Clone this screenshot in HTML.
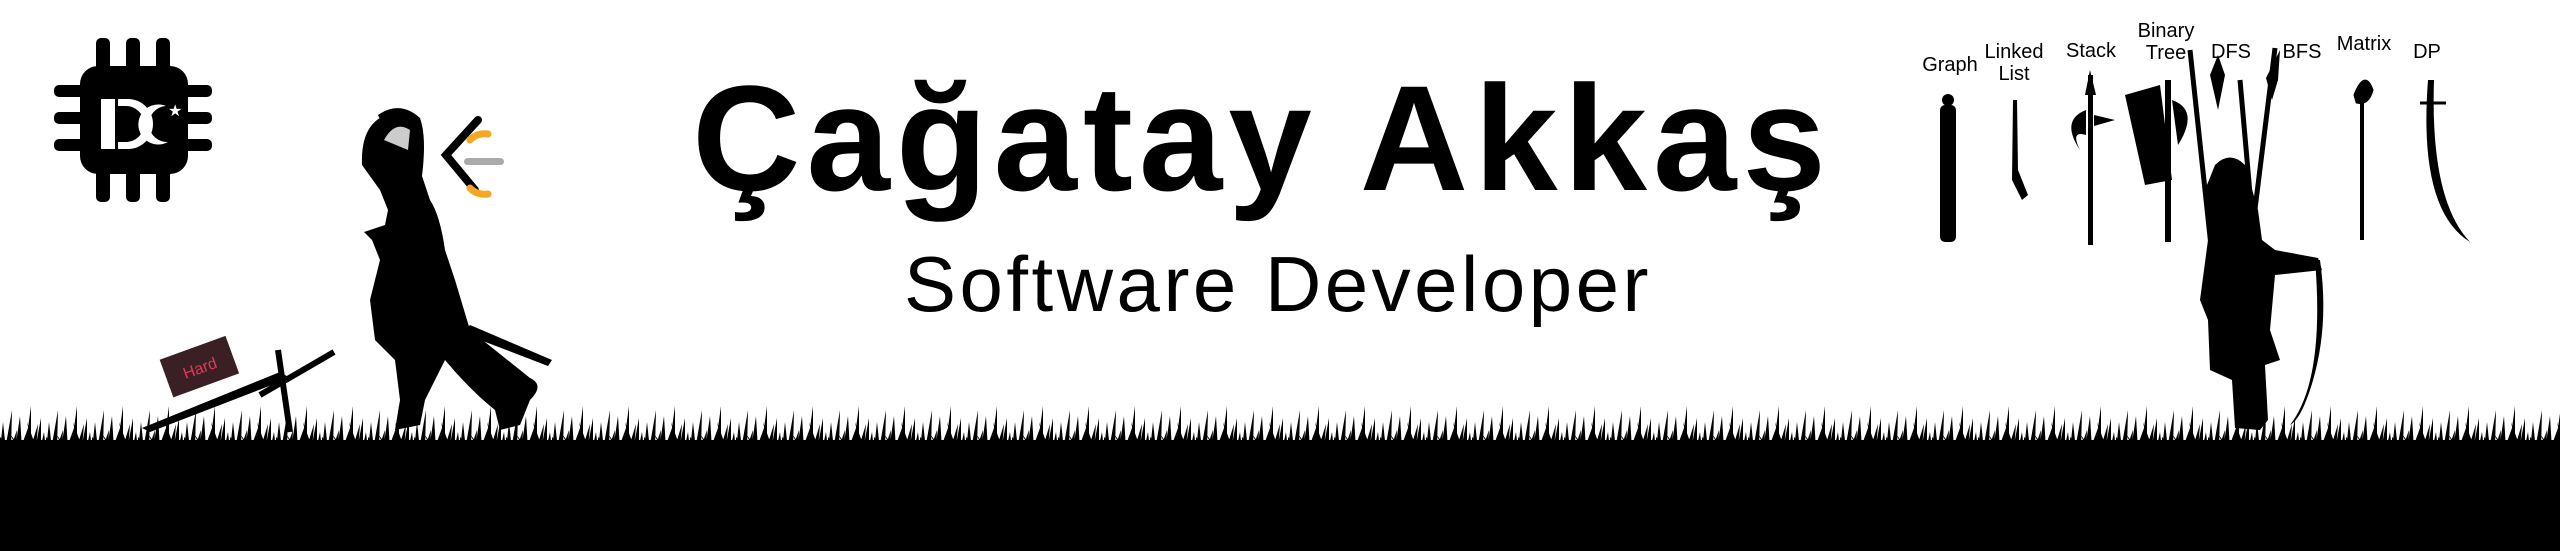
<!DOCTYPE html>
<html><head><meta charset="utf-8"><style>
html,body{margin:0;padding:0;background:#fff;}
body{width:2560px;height:551px;position:relative;overflow:hidden;font-family:"Liberation Sans",sans-serif;}
.t{position:absolute;left:0;width:2560px;text-align:center;color:#000;white-space:nowrap;}
#title{top:48px;font-size:150px;font-weight:bold;letter-spacing:6px;line-height:180px;left:-18px;}
#sub{top:234px;font-size:78px;letter-spacing:3.5px;line-height:100px;left:-2px;}
.lb{position:absolute;font-size:20px;color:#000;transform:translateX(-50%);text-align:center;line-height:22px;}
svg{position:absolute;left:0;top:0;}
</style></head><body>
<svg width="2560" height="551" viewBox="0 0 2560 551">
<defs>
<pattern id="g" width="46" height="50" patternUnits="userSpaceOnUse" x="0" y="400">
<path d="M0 50 L3 22 L6 50 Z M5 50 L12 10 L11 50 Z M10 50 L17 30 L16 50 Z M15 50 L20 16 L22 50 Z M20 50 L28 28 L26 50 Z M25 50 L31 6 L31 50 Z M30 50 L38 24 L36 50 Z M35 50 L41 18 L41 50 Z M40 50 L44 32 L46 50 Z M2 50 L-4 30 L8 50 Z M18 50 L10 34 L22 50 Z M33 50 L27 22 L37 50 Z" fill="#000"/>
</pattern>
</defs>
<rect x="0" y="400" width="2560" height="50" fill="url(#g)"/>
<rect x="0" y="440" width="2560" height="111" fill="#000"/>
<g fill="#000">
<rect x="80" y="66" width="108" height="108" rx="18"/>
<rect x="96" y="38" width="14" height="40" rx="5"/><rect x="126" y="38" width="14" height="40" rx="5"/><rect x="156" y="38" width="14" height="40" rx="5"/>
<rect x="96" y="162" width="14" height="40" rx="5"/><rect x="126" y="162" width="14" height="40" rx="5"/><rect x="156" y="162" width="14" height="40" rx="5"/>
<rect x="54" y="85" width="40" height="12" rx="5"/><rect x="54" y="112" width="40" height="12" rx="5"/><rect x="54" y="139" width="40" height="12" rx="5"/>
<rect x="174" y="85" width="38" height="12" rx="5"/><rect x="174" y="112" width="38" height="12" rx="5"/><rect x="174" y="139" width="38" height="12" rx="5"/>
</g>
<path d="M101 99 h14 v50 h-14 Z M118 99 h10 a25 25 0 0 1 0 50 h-10 v-7 h8 a18 18 0 0 0 0 -36 h-8 Z" fill="#fff"/>
<path d="M166 106 a20 20 0 1 0 2 36 a16 16 0 1 1 -2 -36Z" fill="#fff"/>
<text x="168" y="116" font-size="16" fill="#fff" font-family="DejaVu Sans">★</text>
<path d="M478 120 L446 155 L475 190" stroke="#000" stroke-width="8" fill="none" stroke-linecap="round"/>
<path d="M470 140 a20 20 0 0 1 18 -6 M470 188 a20 20 0 0 0 18 6" stroke="#f5a623" stroke-width="7" fill="none" stroke-linecap="round"/>
<rect x="464" y="158" width="40" height="7" rx="3.5" fill="#aaa"/>
<path d="M362 165 Q360 115 400 112 Q425 120 420 170 L430 200 Q440 215 445 250 L455 280 L470 330 L530 378 Q545 385 530 400 L520 425 L500 430 L495 410 Q470 390 445 360 L425 400 L420 425 L395 430 L400 400 L395 360 L375 340 L370 300 L380 260 L372 240 L364 232 L385 225 L388 210 L380 190 Z" fill="#000"/>
<path d="M470 325 L552 360 L548 366 L462 333 Z" fill="#000"/>
<path d="M378 115 Q400 100 420 118 Q428 140 420 190 L415 190 Q420 140 410 122 Q395 112 382 124 Z" fill="#000"/>
<path d="M384 140 Q395 120 410 130 L408 150 Z" fill="#fff" opacity=".8"/>
<path d="M142 428 L280 372 L290 378 L150 432 Z" fill="#000"/>
<path d="M278 350 L290 432 M260 395 L334 352" stroke="#000" stroke-width="6"/>
<g transform="rotate(-20 190 370)"><rect x="165" y="350" width="70" height="40" fill="#3a1f24"/><text x="200" y="377" font-size="16" fill="#e23a5a" text-anchor="middle">Hard</text></g>
<path d="M2215 165 Q2230 150 2245 165 L2258 210 L2262 240 L2275 250 L2318 258 L2322 270 L2275 275 L2270 330 L2280 360 L2265 365 L2268 420 L2260 430 L2235 428 L2232 380 L2210 370 L2208 320 L2200 300 L2208 240 L2205 190 Z" fill="#000"/>
<path d="M2320 260 Q2330 330 2310 390 Q2300 420 2290 425 Q2325 380 2315 260 Z" fill="#000"/>
<path d="M2190 50 L2220 330 M2275 48 L2240 330 M2240 80 L2262 330" stroke="#000" stroke-width="5"/>
<path d="M2210 75 L2218 110 L2225 75 L2218 55 Z M2266 78 L2280 50 L2278 80 L2272 100 Z" fill="#000"/>
<rect x="1940" y="105" width="16" height="137" rx="5" fill="#000"/><circle cx="1948" cy="100" r="6" fill="#000"/>
<path d="M2013 100 L2017 100 L2018 170 L2028 195 L2022 200 L2012 180 Z" fill="#000"/>
<rect x="2088" y="75" width="5" height="170" fill="#000"/>
<path d="M2086 110 Q2060 120 2080 150 Q2070 130 2086 135 Z M2094 115 L2115 120 L2094 126 Z M2090 70 L2085 95 L2096 95 Z" fill="#000"/>
<rect x="2165" y="80" width="6" height="162" fill="#000"/>
<path d="M2125 95 L2160 85 L2172 180 L2145 185 Z" fill="#000"/>
<path d="M2172 100 Q2200 110 2178 145 Z" fill="#000"/>
<rect x="2360" y="90" width="4" height="150" fill="#000"/>
<path d="M2355 95 Q2365 70 2372 90 Q2368 105 2357 102 Z" fill="#000" stroke="#000" stroke-width="3"/>
<path d="M2428 80 Q2418 210 2470 242 Q2430 200 2434 80 Z" fill="#000"/>
<path d="M2420 103 L2446 103" stroke="#000" stroke-width="3"/>
</svg>
<div class="t" id="title">Çağatay Akkaş</div>
<div class="t" id="sub">Software Developer</div>
<div class="lb" style="left:1950px;top:54px">Graph</div>
<div class="lb" style="left:2014px;top:41px">Linked<br>List</div>
<div class="lb" style="left:2091px;top:40px">Stack</div>
<div class="lb" style="left:2166px;top:20px">Binary<br>Tree</div>
<div class="lb" style="left:2231px;top:41px">DFS</div>
<div class="lb" style="left:2302px;top:41px">BFS</div>
<div class="lb" style="left:2364px;top:33px">Matrix</div>
<div class="lb" style="left:2427px;top:41px">DP</div>
</body></html>
